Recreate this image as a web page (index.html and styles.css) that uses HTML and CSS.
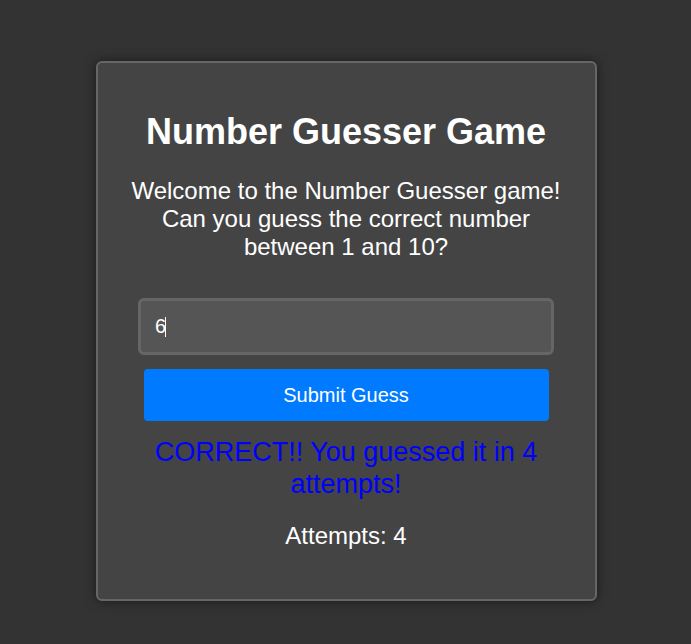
FILE: index.html
```html
<!DOCTYPE html>
<html lang="en">
<head>
<meta charset="utf-8">
<title>Number Guesser Game</title>
<link rel="stylesheet" href="styles.css">
</head>
<body>
<main class="card">
  <h1 class="title">Number Guesser Game</h1>
  <p class="intro">Welcome to the Number Guesser game! Can you guess the correct number between 1 and 10?</p>
  <div class="input-wrap">
    <input class="guess-input" type="number" value="6">
    <span class="caret"></span>
  </div>
  <button class="submit-btn" type="button">Submit Guess</button>
  <p class="result">CORRECT!! You guessed it in 4 attempts!</p>
  <p class="attempts">Attempts: 4</p>
</main>
</body>
</html>
```

FILE: styles.css
```css
html, body {
  margin: 0;
  padding: 0;
}
body {
  background: #333333;
  font-family: "Liberation Sans", Arial, sans-serif;
  color: #ffffff;
  min-height: 644px;
  display: flex;
  justify-content: center;
  align-items: flex-start;
}
.card {
  box-sizing: border-box;
  width: 501px;
  margin-top: 61px;
  margin-left: 1px;
  background: #444444;
  border: 2px solid #666666;
  border-radius: 6px;
  box-shadow: 0 0 12px rgba(0, 0, 0, 0.5);
  padding: 48px 20px 49px;
  display: flex;
  flex-direction: column;
  align-items: center;
  text-align: center;
}
.title {
  margin: 0;
  font-size: 36px;
  font-weight: bold;
  line-height: 42px;
}
.intro {
  margin: 24px 0 0;
  font-size: 24px;
  line-height: 28px;
}
.input-wrap {
  position: relative;
  margin-top: 37px;
}
.guess-input {
  display: block;
  box-sizing: border-box;
  width: 416px;
  height: 57px;
  background: #555555;
  border: 3px solid #666666;
  border-radius: 6px;
  color: #ffffff;
  font-family: "Liberation Sans", Arial, sans-serif;
  font-size: 20px;
  padding: 0 14px;
  outline: none;
  -moz-appearance: textfield;
}
.guess-input::-webkit-outer-spin-button,
.guess-input::-webkit-inner-spin-button {
  -webkit-appearance: none;
  margin: 0;
}
.caret {
  position: absolute;
  left: 27px;
  top: 19px;
  width: 1px;
  height: 20px;
  background: #ffffff;
}
.submit-btn {
  box-sizing: border-box;
  width: 405px;
  height: 52px;
  margin-top: 14px;
  background: #007bff;
  border: none;
  border-radius: 4px;
  color: #ffffff;
  font-family: "Liberation Sans", Arial, sans-serif;
  font-size: 20px;
}
.result {
  width: 400px;
  margin: 15px 0 0;
  color: #0000ff;
  font-size: 27px;
  line-height: 32px;
}
.attempts {
  margin: 22px 0 0;
  font-size: 24px;
  line-height: 28px;
}
```
